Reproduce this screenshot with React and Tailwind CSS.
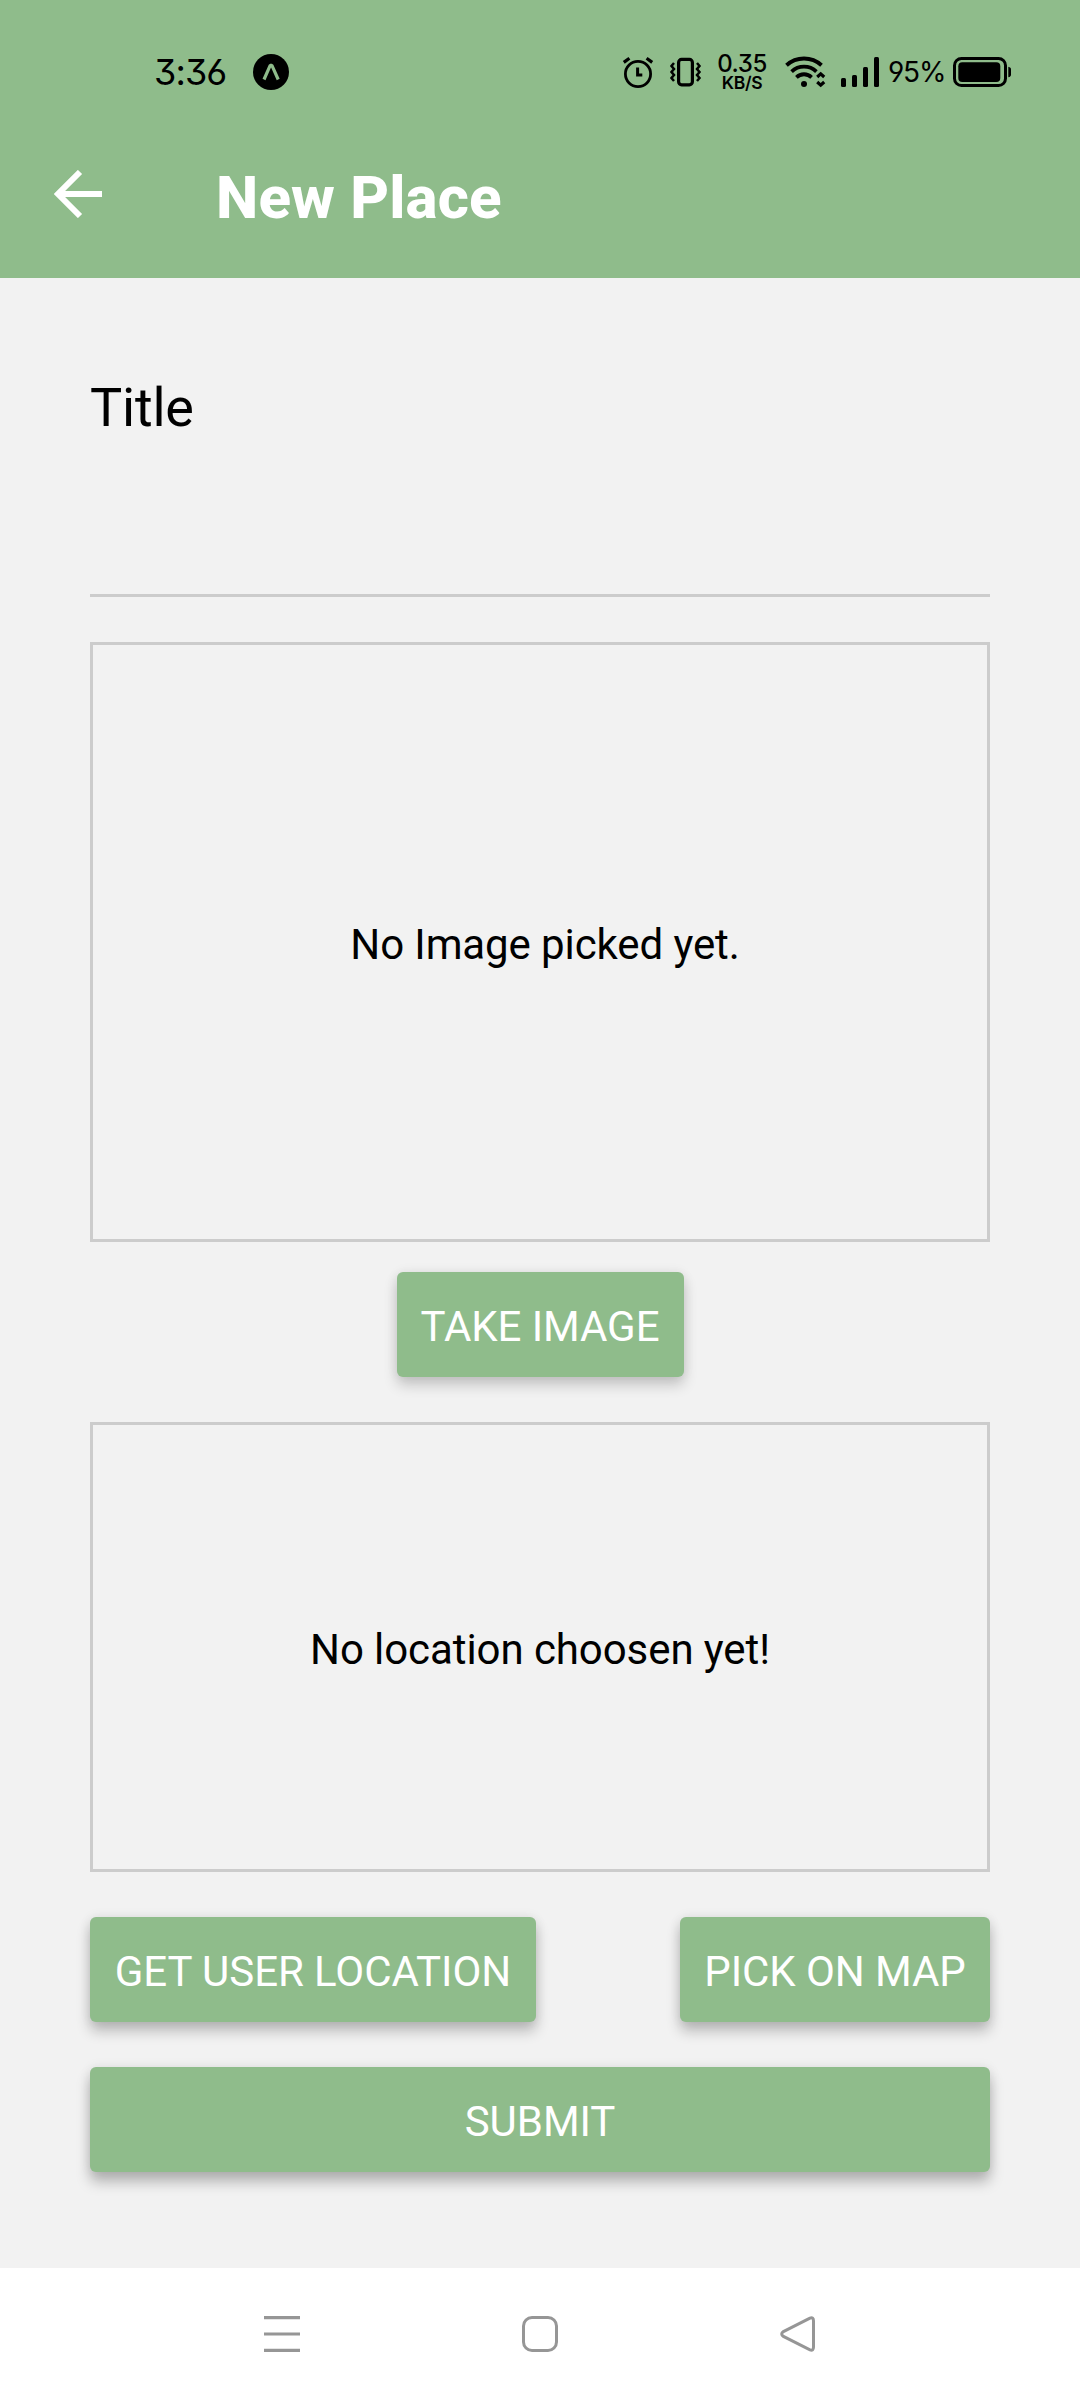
import React from 'react';

function StatusBar() {
  return (
    <div className="flex h-36 items-center pl-[154px] text-black font-[Inter,sans-serif] [font-feature-settings:'cv03','cv04','cv09']">
      <span className="mb-px w-[99px] text-[36px] leading-none font-[380] tracking-[-0.9px] whitespace-nowrap">3:36</span>
      <svg className="size-9" viewBox="0 0 36 36">
        <circle cx="18" cy="18" r="18" fill="#000" />
        <path d="M11 25.5 17.2 11.4H18.9L25.2 25.5" fill="none" stroke="#8fbc8b" strokeWidth="3.2" strokeLinejoin="bevel" />
      </svg>
      <svg className="ml-[333px] h-9 w-8" viewBox="622 54 32 36" fill="none" stroke="#000">
        <circle cx="638" cy="74" r="12.6" strokeWidth="2.8" />
        <path d="M637.6 67.5V75H642.3" strokeWidth="3" />
        <path d="M623.8 62.4 629.4 58.2M652.2 62.4 646.6 58.2" strokeWidth="3.2" />
      </svg>
      <svg className="ml-[14px] h-9 w-9" viewBox="668 54 36 36" fill="none" stroke="#000">
        <rect x="678.6" y="59.4" width="13.8" height="25.4" rx="3" strokeWidth="3.2" />
        <path d="M674 63 671.5 66 674 69 671.5 72 674 75 671.5 78 674 81M697 63 699.5 66 697 69 699.5 72 697 75 699.5 78 697 81" strokeWidth="2.5" />
      </svg>
      <div className="mr-px ml-[11px] flex w-[54px] flex-col items-center font-medium whitespace-nowrap">
        <span className="text-[24px] leading-[18px] tracking-[-0.5px]">0.35</span>
        <span className="mt-[3px] text-[17.5px] leading-[14px] font-semibold tracking-[-0.4px]">KB/S</span>
      </div>
      <svg className="ml-[14px] h-9 w-[42px]" viewBox="784 54 42 36" fill="none" stroke="#000">
        <path d="M786.5 65.2A26 26 0 0 1 821.5 65.2" strokeWidth="3.9" />
        <path d="M791.6 71.6A18 18 0 0 1 816.4 71.6" strokeWidth="3.8" />
        <path d="M796.4 77.3A11 11 0 0 1 811.6 77.3" strokeWidth="3.8" />
        <circle cx="804" cy="84" r="3" fill="#000" stroke="none" />
        <path d="M817.2 77 820.7 73.9 824.2 77M817.2 82 820.7 85.1 824.2 82" strokeWidth="3.2" />
      </svg>
      <svg className="ml-[14px] h-9 w-10" viewBox="840 54 40 36">
        <rect x="841" y="78" width="5" height="9" rx="1.5" />
        <rect x="852" y="75" width="5" height="12" rx="1.5" />
        <rect x="863" y="67" width="5" height="20" rx="1.5" />
        <rect x="874" y="57" width="5" height="30" rx="1.5" />
      </svg>
      <span className="mb-px ml-2 w-[62px] text-[28px] leading-none tracking-[-1.2px] whitespace-nowrap">95%</span>
      <svg className="ml-[2px] h-9 w-[60px]" viewBox="952 54 60 36">
        <rect x="954.5" y="58.5" width="51" height="27" rx="7" fill="none" stroke="#000" strokeWidth="3" />
        <rect x="958.3" y="62.2" width="42" height="19.8" rx="4" />
        <path d="M1008.3 66.8C1010.3 67.2 1011 68.2 1011 69.6V74.4C1011 75.8 1010.3 76.8 1008.3 77.2Z" />
      </svg>
    </div>
  );
}

function Header() {
  return (
    <header className="h-[278px] bg-[#8fbc8b]">
      <StatusBar />
      <div className="flex h-[100px] items-center pl-[54px] text-white">
        <svg className="size-12" viewBox="0 0 48 48" fill="none" stroke="#fff" strokeWidth="6">
          <path d="M26 2 4 24 26 46M4 24H48" />
        </svg>
        <h1 className="mt-[7px] ml-[114px] text-[60px] leading-none font-extrabold tracking-[0.15px]">New Place</h1>
      </div>
    </header>
  );
}

function Button({ children, className = '' }) {
  return (
    <button className={`flex h-[105px] items-center justify-center rounded-md bg-[#8fbc8b] pt-1 text-[42px] tracking-[-0.07px] whitespace-nowrap text-white ${className}`}>
      {children}
    </button>
  );
}

function Preview({ children, className }) {
  return (
    <div className={`flex items-center justify-center border-3 border-[#ccc] pt-1 text-[42px] text-black ${className}`}>
      {children}
    </div>
  );
}

function NavBar() {
  return (
    <nav className="flex h-[132px] items-center justify-between bg-white px-[264px]">
      <svg className="size-9" viewBox="0 0 36 36" stroke="#969696" strokeWidth="3.2">
        <path d="M0 1.6H36M0 18H36M0 34.4H36" />
      </svg>
      <svg className="size-9" viewBox="0 0 36 36" fill="none" stroke="#969696" strokeWidth="3">
        <rect x="1.5" y="1.5" width="33" height="33" rx="8.5" />
      </svg>
      <svg className="size-9" viewBox="0 0 36 36" fill="none" stroke="#969696" strokeWidth="3">
        <path d="M30 2.1 3.4 15.6Q0 18 3.4 20.4L30 33.9Q33.5 35 33.5 31V5Q33.5 1 30 2.1Z" />
      </svg>
    </nav>
  );
}

export default function App() {
  return (
    <div className="flex h-[2400px] w-[1080px] flex-col overflow-hidden bg-[#f2f2f2] font-[Roboto,sans-serif]">
      <Header />
      <main className="flex flex-1 flex-col px-[90px]">
        <label className="mt-[97px] text-[54px] leading-[66px] tracking-[-0.2px] text-black" htmlFor="title">Title</label>
        <input id="title" className="h-[156px] border-b-3 border-[#ccc] bg-transparent text-[42px] outline-none" />
        <Preview className="mt-[45px] h-[600px] pl-[10px] tracking-[-0.1px]">No Image picked yet.</Preview>
        <Button className="mt-[30px] w-[287px] self-center shadow-[0_8px_14px_rgba(0,0,0,0.19),0_0_12px_rgba(0,0,0,0.07)]">TAKE IMAGE</Button>
        <Preview className="mt-[45px] h-[450px] tracking-[-0.08px]">No location choosen yet!</Preview>
        <div className="mt-[45px] flex justify-between">
          <Button className="w-[446px] shadow-[0_9px_14px_rgba(0,0,0,0.24),0_0_12px_rgba(0,0,0,0.08)]">GET USER LOCATION</Button>
          <Button className="w-[310px] shadow-[0_9px_14px_rgba(0,0,0,0.24),0_0_12px_rgba(0,0,0,0.08)]">PICK ON MAP</Button>
        </div>
        <Button className="mt-[45px] w-full shadow-[0_10px_14px_rgba(0,0,0,0.26),0_0_12px_rgba(0,0,0,0.08)]">SUBMIT</Button>
      </main>
      <NavBar />
    </div>
  );
}
